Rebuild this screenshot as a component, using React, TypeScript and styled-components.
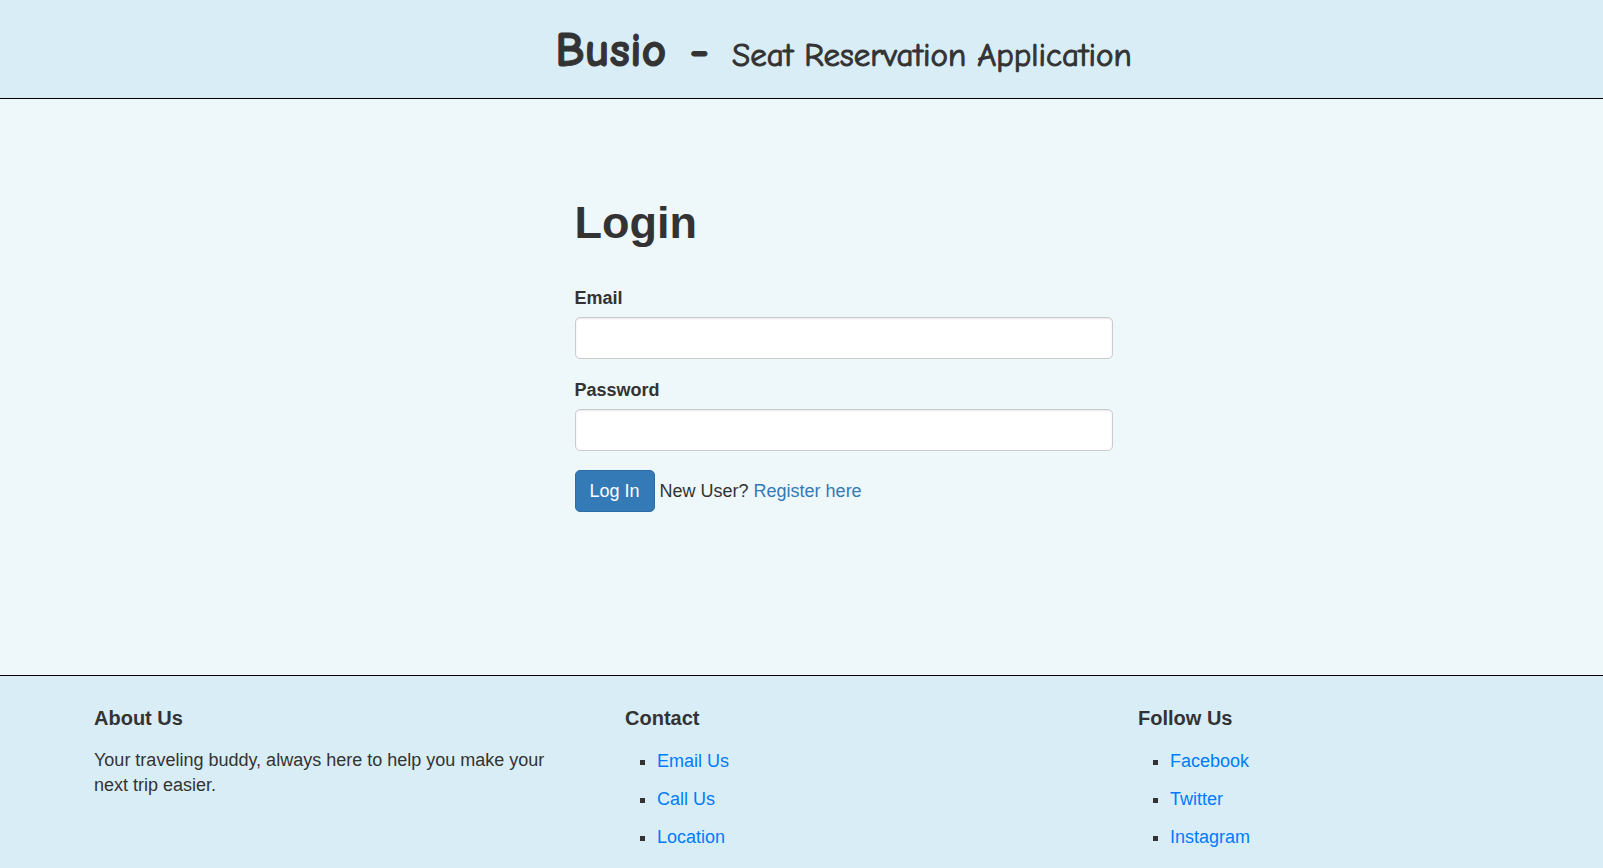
import React from "react";
import styled, { createGlobalStyle } from "styled-components";

const GlobalStyle = createGlobalStyle`
  *, *::before, *::after { box-sizing: border-box; }
  html, body, #root { height: 100%; }
  body {
    margin: 0;
    background: #eef7fa;
    color: #333;
    font-family: Arial, "Liberation Sans", sans-serif;
    font-size: 18px;
    line-height: 25px;
  }
`;

const Page = styled.div`
  min-height: 100%;
  display: flex;
  flex-direction: column;
`;

const Header = styled.header`
  display: flex;
  justify-content: center;
  padding: 23px 0 19px 84px;
  background: #d9edf6;
  border-bottom: 1px solid #000;
`;

const Brand = styled.h1`
  display: flex;
  align-items: baseline;
  gap: 23px;
  margin: 0;
  font-family: "Comic Sans MS", "Comic Neue", Lato, cursive;
  font-size: 48px;
  font-weight: 700;
  line-height: 56px;
  white-space: nowrap;
  -webkit-text-stroke: 1px currentColor;
`;

const Tagline = styled.span`
  font-size: 33px;
  font-weight: 400;
  line-height: 40px;
`;

const Main = styled.main`
  flex: 1;
  display: flex;
  justify-content: center;
  padding: 99px 0 162px 84px;
`;

const LoginForm = styled.form`
  width: 100%;
  max-width: 538px;
`;

const Title = styled.h2`
  margin: 0 0 38px;
  font-size: 45px;
  line-height: 50px;
`;

const Field = styled.div`
  display: flex;
  flex-direction: column;
  gap: 6px;
  margin-bottom: 19px;
`;

const Label = styled.label`
  font-weight: 700;
`;

const Input = styled.input`
  width: 100%;
  height: 42px;
  padding: 8px 15px;
  border: 1px solid #ccc;
  border-radius: 5px;
  background: #fff;
  color: #555;
  font: inherit;
  box-shadow: inset 0 1px 2px rgba(0, 0, 0, 0.1);
`;

const Actions = styled.div`
  display: flex;
  align-items: center;
  gap: 5px;
`;

const Button = styled.button`
  height: 42px;
  padding: 0 14px;
  border: 1px solid #2e6da4;
  border-radius: 5px;
  background: #337ab7;
  color: #fff;
  font: inherit;
  cursor: pointer;
`;

const Link = styled.a<{ $color: string }>`
  color: ${(p) => p.$color};
  text-decoration: none;
  &:hover { text-decoration: underline; }
`;

const Footer = styled.footer`
  display: grid;
  grid-template-columns: 531fr 513fr 465fr;
  min-height: 193px;
  padding: 30px 0 6px 94px;
  background: #d9edf6;
  border-top: 1px solid #000;
`;

const Column = styled.section`
  padding-right: 60px;
`;

const ColumnTitle = styled.h3`
  margin: 0 0 18px;
  font-size: 20px;
  line-height: 24px;
`;

const Text = styled.p`
  margin: 0;
`;

const List = styled.ul`
  display: flex;
  flex-direction: column;
  gap: 13px;
  margin: 0;
  padding: 1px 0 0 32px;
  list-style: square;
`;

const groups = [
  { title: "Contact", links: ["Email Us", "Call Us", "Location"] },
  { title: "Follow Us", links: ["Facebook", "Twitter", "Instagram"] },
];

export default function App() {
  return (
    <Page>
      <GlobalStyle />
      <Header>
        <Brand>
          <span>Busio</span>
          <span>-</span>
          <Tagline>Seat Reservation Application</Tagline>
        </Brand>
      </Header>
      <Main>
        <LoginForm onSubmit={(e) => e.preventDefault()}>
          <Title>Login</Title>
          <Field>
            <Label htmlFor="email">Email</Label>
            <Input id="email" type="email" />
          </Field>
          <Field>
            <Label htmlFor="password">Password</Label>
            <Input id="password" type="password" />
          </Field>
          <Actions>
            <Button type="submit">Log In</Button>
            <span>
              New User? <Link href="#register" $color="#337ab7">Register here</Link>
            </span>
          </Actions>
        </LoginForm>
      </Main>
      <Footer>
        <Column>
          <ColumnTitle>About Us</ColumnTitle>
          <Text>Your traveling buddy, always here to help you make your next trip easier.</Text>
        </Column>
        {groups.map((group) => (
          <Column key={group.title}>
            <ColumnTitle>{group.title}</ColumnTitle>
            <List>
              {group.links.map((name) => (
                <li key={name}>
                  <Link href="#" $color="#007bff">{name}</Link>
                </li>
              ))}
            </List>
          </Column>
        ))}
      </Footer>
    </Page>
  );
}
